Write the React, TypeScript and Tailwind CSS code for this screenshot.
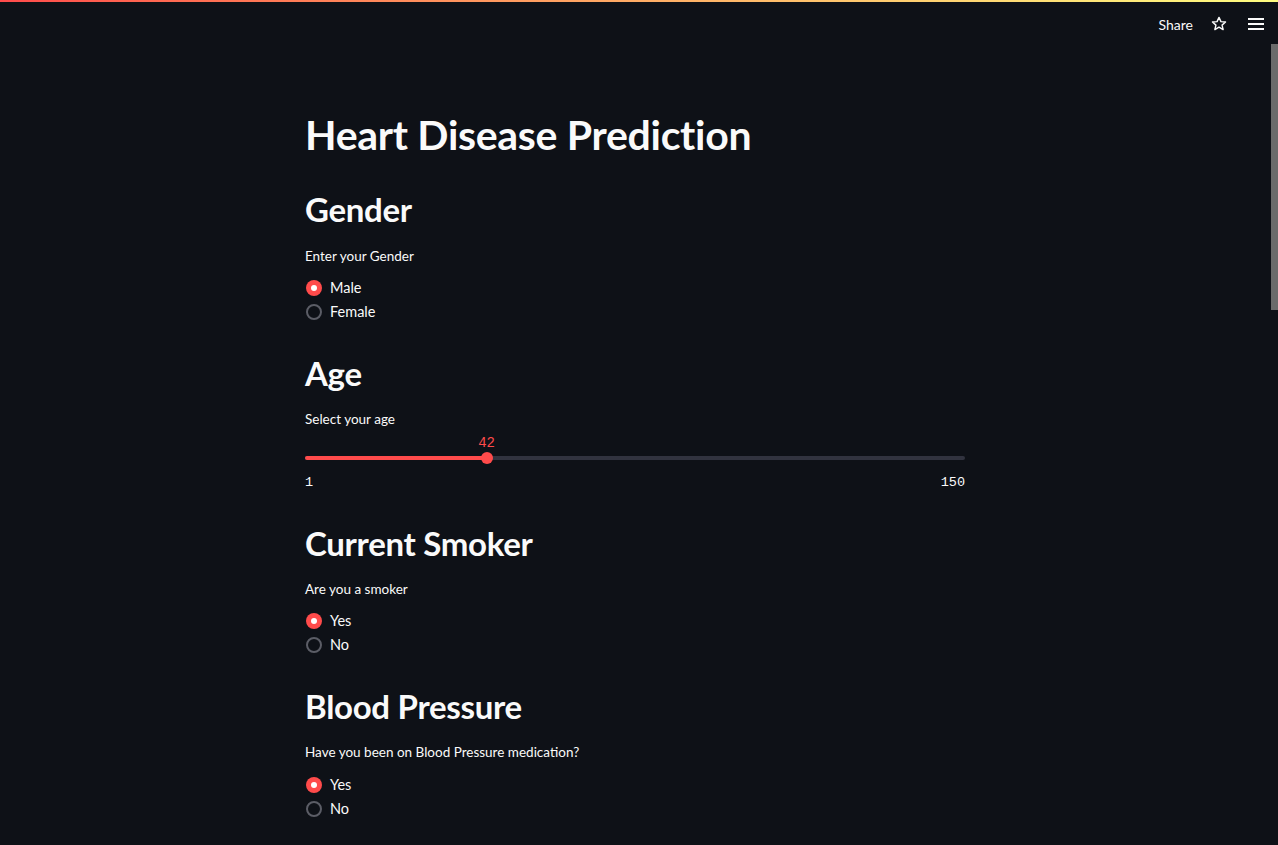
import { useState } from 'react';

const SANS = "font-['Lato','Noto_Sans',sans-serif]";
const MONO = "font-['Liberation_Mono','DejaVu_Sans_Mono',monospace]";

type RadioProps = {
  options: string[];
  value: string;
  onChange: (v: string) => void;
};

const RadioGroup = ({ options, value, onChange }: RadioProps) => (
  <div className="flex flex-col">
    {options.map((o) => {
      const checked = o === value;
      return (
        <button
          key={o}
          onClick={() => onChange(o)}
          className="flex h-[24px] items-center gap-[8px] text-left"
        >
          <span
            className={`flex h-[16px] w-[16px] items-center justify-center rounded-full ml-[1px] ${
              checked ? 'bg-[#ff4b4b]' : 'border-2 border-[#5b5d66]'
            }`}
          >
            {checked && <span className="h-[6px] w-[6px] rounded-full bg-white" />}
          </span>
          <span className="text-[14.5px] text-[#fafafa]">{o}</span>
        </button>
      );
    })}
  </div>
);

const Label = ({ text, className }: { text: string; className?: string }) => (
  <div className={`flex h-[20px] items-center text-[13.5px] text-[#fafafa] ${className ?? ''}`}>{text}</div>
);

const Heading = ({ text, className }: { text: string; className?: string }) => (
  <h2 className={`flex h-[40px] items-center text-[33px] font-bold tracking-[-0.3px] text-[#fafafa] ${className ?? ''}`}>
    {text}
  </h2>
);

const App = () => {
  const [gender, setGender] = useState('Male');
  const [smoker, setSmoker] = useState('Yes');
  const [bp, setBp] = useState('Yes');
  const age = 42;
  const pct = ((age - 1) / (150 - 1)) * 100;

  return (
    <div className={`relative min-h-[845px] overflow-hidden bg-[#0e1117] ${SANS}`}>
      <div className="h-[2px] bg-gradient-to-r from-[#ff4b4b] to-[#fffd80]" />
      <header className="flex h-[44px] items-center justify-end pr-[14px]">
        <span className="mr-[17px] text-[14px] text-[#fafafa]">Share</span>
        <svg width="18" height="18" viewBox="0 0 24 24" className="mr-[20px]">
          <path
            d="M12 3.2l2.6 5.6 6.1.6-4.6 4.1 1.4 6-5.5-3.2-5.5 3.2 1.4-6-4.6-4.1 6.1-.6z"
            fill="none"
            stroke="#fafafa"
            strokeWidth="1.9"
            strokeLinejoin="round"
          />
        </svg>
        <svg width="16" height="14" viewBox="0 0 16 14">
          <rect x="0" y="1" width="16" height="2" fill="#fafafa" />
          <rect x="0" y="6" width="16" height="2" fill="#fafafa" />
          <rect x="0" y="11" width="16" height="2" fill="#fafafa" />
        </svg>
      </header>

      <div className="absolute right-0 top-[44px] h-[266px] w-[7px] bg-[#6b6b6b]" />

      <main className="mx-auto w-[660px] translate-x-[-4px] pb-[25px]">
        <h1 className="mt-[64px] flex h-[50px] items-center text-[41px] font-bold tracking-[-0.3px] text-[#fafafa]">
          Heart Disease Prediction
        </h1>

        <Heading text="Gender" className="mt-[30px]" />
        <Label text="Enter your Gender" className="mt-[16px]" />
        <div className="mt-[10px]">
          <RadioGroup options={['Male', 'Female']} value={gender} onChange={setGender} />
        </div>

        <Heading text="Age" className="mt-[30px]" />
        <Label text="Select your age" className="mt-[15px]" />
        <div className="relative mt-[5px] h-[18px]">
          <span
            className={`absolute top-0 flex h-[18px] -translate-x-1/2 items-center text-[14px] text-[#ff4b4b] ${MONO}`}
            style={{ left: `${pct}%` }}
          >
            {age}
          </span>
        </div>
        <div className="relative flex h-[12px] items-center">
          <div className="h-[4px] w-full rounded-full bg-[#31333f]" />
          <div className="absolute left-0 h-[4px] rounded-full bg-[#ff4b4b]" style={{ width: `${pct}%` }} />
          <div
            className="absolute h-[12px] w-[12px] -translate-x-1/2 rounded-full bg-[#ff4b4b]"
            style={{ left: `${pct}%` }}
          />
        </div>
        <div className={`mt-[9px] flex h-[20px] items-center justify-between text-[13.5px] text-[#fafafa] ${MONO}`}>
          <span>1</span>
          <span>150</span>
        </div>

        <Heading text="Current Smoker" className="mt-[31px]" />
        <Label text="Are you a smoker" className="mt-[15px]" />
        <div className="mt-[10px]">
          <RadioGroup options={['Yes', 'No']} value={smoker} onChange={setSmoker} />
        </div>

        <Heading text="Blood Pressure" className="mt-[30px]" />
        <Label text="Have you been on Blood Pressure medication?" className="mt-[15px]" />
        <div className="mt-[11px]">
          <RadioGroup options={['Yes', 'No']} value={bp} onChange={setBp} />
        </div>
      </main>
    </div>
  );
};

export default App;
